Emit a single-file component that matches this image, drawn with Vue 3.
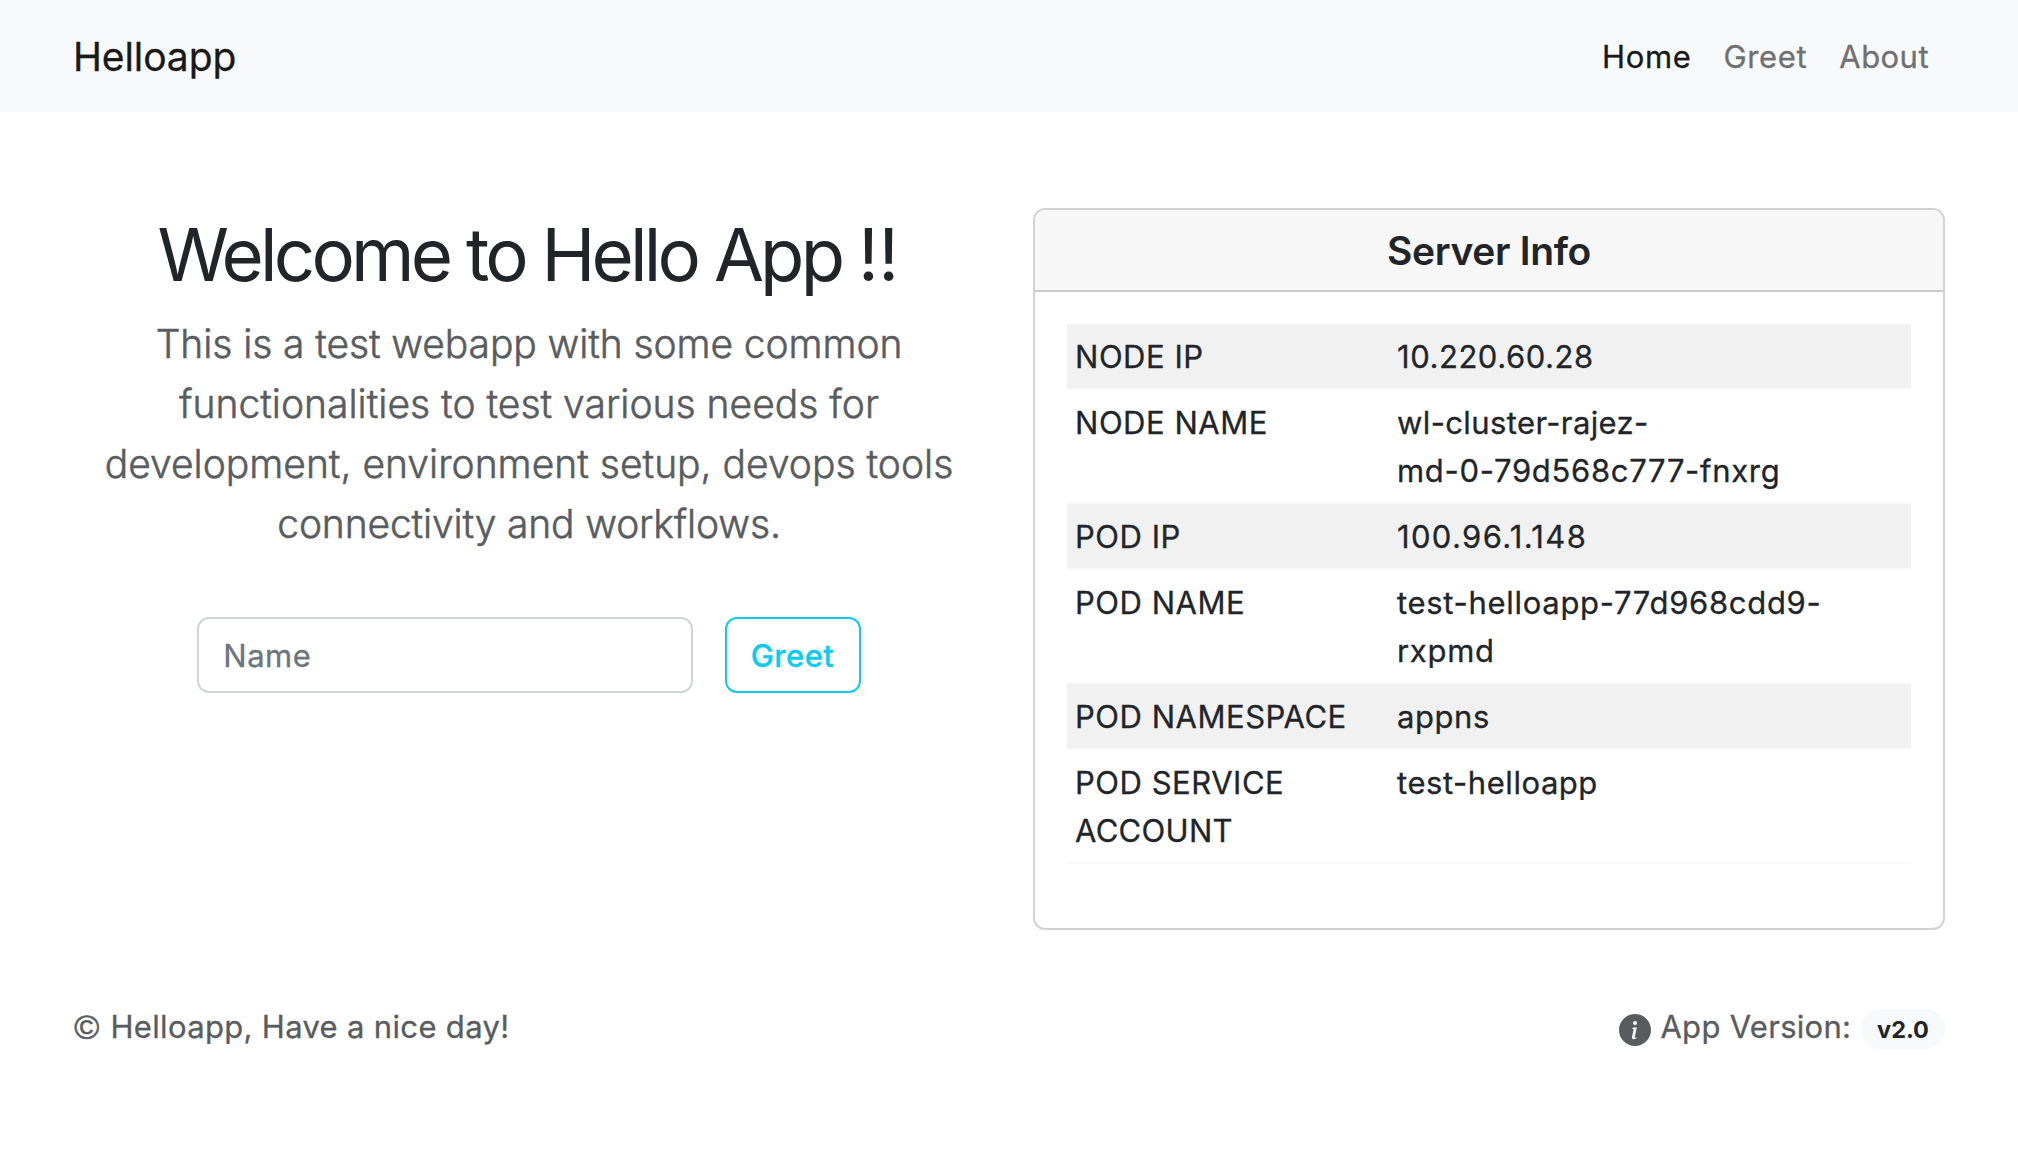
<script setup>
const links = [
  { label: 'Home', cls: 'active' },
  { label: 'Greet', cls: '' },
  { label: 'About', cls: 'snug' },
]
const info = [
  { label: ['NODE IP'], value: ['10.220.60.28'] },
  { label: ['NODE NAME'], value: ['wl-cluster-rajez-', 'md-0-79d568c777-fnxrg'], cls: ['snug', 'loose'] },
  { label: ['POD IP'], value: ['100.96.1.148'], cls: ['wide'] },
  { label: ['POD NAME'], value: ['test-helloapp-77d968cdd9-', 'rxpmd'], cls: ['loose', 'loose'] },
  { label: ['POD NAMESPACE'], value: ['appns'] },
  { label: ['POD SERVICE', 'ACCOUNT'], value: ['test-helloapp'], labelCls: ['', 'tight'] },
]
</script>

<template>
  <div class="page">
    <header class="navbar">
      <a class="brand">Helloapp</a>
      <nav class="links">
        <a v-for="l in links" :key="l.label" :class="l.cls">{{ l.label }}</a>
      </nav>
    </header>

    <main class="content">
      <section class="intro">
        <h1>Welcome to Hello App <span class="marks">!!</span></h1>
        <p class="lead">
          <span class="l1">This is a test webapp with some common </span>
          <span>functionalities to test various needs for </span>
          <span>development, environment setup, devops tools </span>
          <span class="l4">connectivity and workflows.</span>
        </p>
        <form class="greet" @submit.prevent>
          <input type="text" placeholder="Name" />
          <button type="submit">Greet</button>
        </form>
      </section>

      <section class="card">
        <h2>Server Info</h2>
        <div class="card-body">
          <div v-for="row in info" :key="row.label[0]" class="row">
            <div class="label">
              <span v-for="(t, i) in row.label" :key="t" :class="row.labelCls?.[i]">{{ t }}</span>
            </div>
            <div class="value">
              <span v-for="(t, i) in row.value" :key="t" :class="row.cls?.[i]">{{ t }}</span>
            </div>
          </div>
        </div>
      </section>
    </main>

    <footer class="footer">
      <div class="copy"><span class="mark">©</span><span class="copy-text">Helloapp, Have a nice day!</span></div>
      <div class="version">
        <svg width="32" height="32" viewBox="0 0 16 16" fill="currentColor" aria-hidden="true">
          <path d="M8 16A8 8 0 1 0 8 0a8 8 0 0 0 0 16zm.93-9.412-1 4.705c-.07.34.029.533.304.533.194 0 .487-.07.686-.246l-.088.416c-.287.346-.92.598-1.465.598-.703 0-1.002-.422-.808-1.319l.738-3.468c.064-.293.006-.399-.287-.47l-.451-.081.082-.381 2.29-.287zM8 5.5a1 1 0 1 1 0-2 1 1 0 0 1 0 2z" />
        </svg>
        <span class="version-text">App Version:</span>
        <span class="badge">v2.0</span>
      </div>
    </footer>
  </div>
</template>

<style>
body {
  margin: 0;
  background: #fff;
}
</style>

<style scoped>
.page {
  box-sizing: border-box;
  min-height: 1154px;
  font-family: Inter, "Liberation Sans", sans-serif;
  font-size: 31px;
  line-height: 48px;
  letter-spacing: 0.55px;
  color: #212529;
  -webkit-text-stroke: 0.3px currentColor;
}
.page * {
  box-sizing: border-box;
}
.navbar {
  display: flex;
  align-items: center;
  justify-content: space-between;
  height: 112px;
  padding: 0 89px 0 72.9px;
  background: #f8f9fb;
}
.brand {
  padding-top: 2px;
  font-size: 39px;
  line-height: 60px;
  letter-spacing: -0.08px;
  color: #19191a;
}
.links {
  display: flex;
  gap: 32px;
  padding-top: 2px;
  color: #707071;
}
.links a {
  letter-spacing: 0.65px;
}
.links .snug {
  letter-spacing: 0.45px;
}
.links .active {
  color: #19191a;
}
.content {
  display: flex;
  padding: 96px 73px 0;
}
.intro {
  width: 912px;
  margin-right: 48px;
  text-align: center;
}
h1 {
  margin: 2px 0 14px;
  padding-right: 2px;
  font-size: 72.5px;
  font-weight: 400;
  line-height: 89px;
  letter-spacing: -3.78px;
  white-space: nowrap;
  -webkit-text-stroke: 0;
}
.marks {
  letter-spacing: -0.6px;
}
.lead {
  margin: 0;
  padding-top: 1px;
  font-size: 39px;
  font-weight: 300;
  line-height: 60px;
  letter-spacing: 0;
  color: #595c5f;
  -webkit-text-stroke: 0.55px currentColor;
}
.lead span {
  display: block;
}
.lead .l1 {
  letter-spacing: -0.1px;
}
.lead .l4 {
  letter-spacing: -0.16px;
}
.greet {
  display: flex;
  justify-content: center;
  gap: 32px;
  margin: 63px 0 0;
}
.greet input,
.greet button {
  height: 76px;
  border: 2px solid #ced4da;
  border-radius: 12px;
  background: #fff;
  font: inherit;
}
.greet input {
  width: 496px;
  padding: 0 24.3px;
  letter-spacing: 0.5px;
}
.greet input::placeholder {
  color: #6c757d;
  opacity: 1;
}
.greet button {
  width: 136px;
  padding: 1px 1px 0 0;
  border-color: #0dcaf0;
  color: #0dcaf0;
  font-weight: 500;
  letter-spacing: 0.43px;
}
.card {
  width: 912px;
  height: 722px;
  border: 2px solid #d2d2d2;
  border-radius: 12px;
  overflow: hidden;
}
h2 {
  height: 82px;
  margin: 0;
  padding-top: 17px;
  border-bottom: 2px solid #cbcbcb;
  background: #f7f7f7;
  font-size: 39px;
  font-weight: 600;
  line-height: 48px;
  letter-spacing: -0.35px;
  text-align: center;
  -webkit-text-stroke: 0;
}
.card-body {
  padding: 32px;
}
.row {
  display: flex;
  padding: 9px 8px 7px;
  border-bottom: 2px solid #f9f9fa;
}
.row:nth-child(odd) {
  background: #f1f1f1;
  background-clip: padding-box;
}
.label {
  width: 322px;
  letter-spacing: 0.52px;
}
.row span {
  display: block;
}
.row .snug {
  letter-spacing: 0.38px;
}
.row .loose {
  letter-spacing: 0.69px;
}
.row .wide {
  letter-spacing: 1.35px;
}
.row .tight {
  letter-spacing: 0.3px;
}
.footer {
  display: flex;
  justify-content: space-between;
  align-items: center;
  height: 48px;
  margin-top: 73px;
  padding: 0 73px 0 74.2px;
  color: #595c5f;
}
.copy,
.version {
  display: flex;
  align-items: center;
}
.mark {
  width: 36.3px;
  font-family: "Liberation Sans", sans-serif;
  font-size: 34px;
  -webkit-text-stroke: 0.6px currentColor;
}
.copy-text {
  letter-spacing: 0.33px;
}
.version svg {
  margin: 6px 9.4px 0 0;
}
.version-text {
  width: 200.6px;
  letter-spacing: 0.3px;
}
.badge {
  width: 84px;
  height: 40px;
  margin-top: 4px;
  border-radius: 20px;
  background: #f8f9fb;
  color: #212529;
  font-size: 23.5px;
  font-weight: 700;
  line-height: 41px;
  letter-spacing: 0;
  text-align: center;
  -webkit-text-stroke: 0;
}
</style>
